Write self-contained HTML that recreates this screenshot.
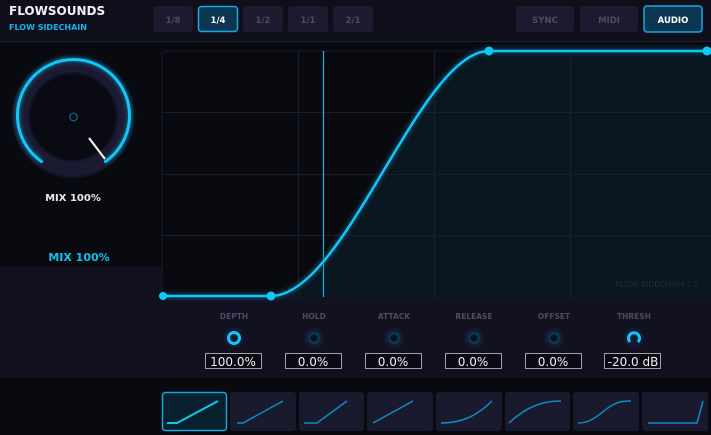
<!DOCTYPE html>
<html><head><style>
html,body{margin:0;padding:0;width:711px;height:435px;overflow:hidden;background:#090a10;font-family:"DejaVu Sans","Liberation Sans",sans-serif}
</style></head><body>
<svg width="711" height="435" viewBox="0 0 711 435" xmlns="http://www.w3.org/2000/svg" style="display:block" font-family="'DejaVu Sans',sans-serif">
<defs>
<filter id="gl" x="-20%" y="-20%" width="140%" height="140%"><feGaussianBlur stdDeviation="2"/></filter>
</defs>
<rect x="0" y="0" width="711" height="435" fill="#090a10"/>
<rect x="0" y="0" width="711" height="41" fill="#0f0f1b"/>
<line x1="0" y1="41.5" x2="711" y2="41.5" stroke="#1a2030" stroke-width="1"/>
<rect x="0" y="267" width="162" height="111" fill="#11111f"/>
<rect x="162" y="297" width="549" height="81" fill="#11111f"/>
<text x="9" y="15" font-size="12" font-weight="bold" fill="#f2f2f5">FLOWSOUNDS</text>
<text x="9" y="30" font-size="8" font-weight="bold" fill="#14b4ee">FLOW SIDECHAIN</text>
<g font-size="8.5" font-weight="bold" text-anchor="middle">
<rect x="153" y="6" width="40" height="26" rx="3" fill="#1c1a2e"/><text x="173" y="23" fill="#4c4a66">1/8</text>
<rect x="198.5" y="6.5" width="39" height="25" rx="3" fill="#0b3550" stroke="#16a8e0" stroke-width="1.5"/><text x="218" y="23" fill="#fff">1/4</text>
<rect x="243" y="6" width="40" height="26" rx="3" fill="#1c1a2e"/><text x="263" y="23" fill="#4c4a66">1/2</text>
<rect x="288" y="6" width="40" height="26" rx="3" fill="#1c1a2e"/><text x="308" y="23" fill="#4c4a66">1/1</text>
<rect x="333" y="6" width="40" height="26" rx="3" fill="#1c1a2e"/><text x="353" y="23" fill="#4c4a66">2/1</text>
<rect x="516" y="6" width="58" height="26" rx="3" fill="#1c1a2e"/><text x="545" y="23" fill="#4c4a66">SYNC</text>
<rect x="580" y="6" width="58" height="26" rx="3" fill="#1c1a2e"/><text x="609" y="23" fill="#4c4a66">MIDI</text>
<rect x="644" y="6" width="58" height="26" rx="3" fill="#0b3550" stroke="#16a8e0" stroke-width="1.5"/><text x="673" y="23" fill="#fff">AUDIO</text>
</g>
<circle cx="73" cy="117" r="61" fill="#121428"/>
<circle cx="73" cy="117" r="52" fill="none" stroke="#1c1a30" stroke-width="14"/>
<path d="M41.5 161.5 A56 56 0 1 1 105.5 161.5" fill="none" stroke="#0a6a90" stroke-width="6" filter="url(#gl)" opacity="0.7"/>
<path d="M41.5 161.5 A56 56 0 1 1 105.5 161.5" fill="none" stroke="#10c8f5" stroke-width="3" stroke-linecap="round"/>
<circle cx="73" cy="117" r="43" fill="#0a0b12"/>
<circle cx="73.5" cy="117" r="3.8" fill="none" stroke="#0a6a90" stroke-width="1.2"/>
<line x1="89" y1="138" x2="105" y2="159" stroke="#f0f0f0" stroke-width="2.2"/>
<text x="73" y="201" font-size="10" font-weight="bold" fill="#e8e8ee" text-anchor="middle">MIX 100%</text>
<text x="79" y="261" font-size="11" font-weight="bold" fill="#10c0f0" text-anchor="middle">MIX 100%</text>
<rect x="162" y="51" width="560" height="246" rx="4" fill="#090a10" stroke="#181a2a" stroke-width="1"/>
<path d="M162 296 L271 296 C345 296 420 51 489 51 L711 51 L711 296 Z" fill="#0a1620"/>
<g stroke="#1a1c30" stroke-width="1">
<line x1="298.5" y1="51" x2="298.5" y2="297"/><line x1="434.5" y1="51" x2="434.5" y2="297"/><line x1="570.5" y1="51" x2="570.5" y2="297"/>
<line x1="162" y1="112.5" x2="711" y2="112.5"/><line x1="162" y1="174.5" x2="711" y2="174.5"/><line x1="162" y1="235.5" x2="711" y2="235.5"/>
</g>
<line x1="323.5" y1="51" x2="323.5" y2="297" stroke="#10b8e8" stroke-width="1.2"/>
<path d="M162 296 L271 296 C345 296 420 51 489 51 L711 51" fill="none" stroke="#0a5a80" stroke-width="6" opacity="0.6" filter="url(#gl)"/>
<path d="M162 296 L271 296 C345 296 420 51 489 51 L711 51" fill="none" stroke="#10c8f5" stroke-width="2.5"/>
<g fill="#10c8f5"><circle cx="163" cy="296" r="4"/><circle cx="271" cy="296" r="4.5"/><circle cx="489" cy="51" r="4.5"/><circle cx="707" cy="51" r="4.5"/></g>
<text x="698" y="287" font-size="8" fill="#242838" text-anchor="end" font-family="'Liberation Sans',sans-serif">FLOW SIDECHAIN 1.1</text>
<g font-size="7.5" font-weight="bold" fill="#4c4a66" text-anchor="middle">
<text x="234" y="319">DEPTH</text><text x="314" y="319">HOLD</text><text x="394" y="319">ATTACK</text><text x="474" y="319">RELEASE</text><text x="554" y="319">OFFSET</text><text x="634" y="319">THRESH</text>
</g>
<g>
<circle cx="234" cy="338" r="10" fill="#181a34"/><circle cx="234" cy="338" r="5.5" fill="none" stroke="#10c8f5" stroke-width="3"/>
<circle cx="314" cy="338" r="10" fill="#181a34"/><circle cx="314" cy="338" r="5" fill="none" stroke="#0a3a58" stroke-width="2.5"/><circle cx="314" cy="338" r="3" fill="#081020"/>
<circle cx="394" cy="338" r="10" fill="#181a34"/><circle cx="394" cy="338" r="5" fill="none" stroke="#0a3a58" stroke-width="2.5"/><circle cx="394" cy="338" r="3" fill="#081020"/>
<circle cx="474" cy="338" r="10" fill="#181a34"/><circle cx="474" cy="338" r="5" fill="none" stroke="#0a3a58" stroke-width="2.5"/><circle cx="474" cy="338" r="3" fill="#081020"/>
<circle cx="554" cy="338" r="10" fill="#181a34"/><circle cx="554" cy="338" r="5" fill="none" stroke="#0a3a58" stroke-width="2.5"/><circle cx="554" cy="338" r="3" fill="#081020"/>
<circle cx="634" cy="338" r="10" fill="#181a34"/><path d="M630 342 A5.5 5.5 0 1 1 638 342" fill="none" stroke="#10c8f5" stroke-width="3"/>
</g>
<g fill="#0a0b12" stroke="#a0a0aa" stroke-width="1">
<rect x="205.5" y="353.5" width="56" height="15"/><rect x="285.5" y="353.5" width="56" height="15"/><rect x="365.5" y="353.5" width="56" height="15"/><rect x="445.5" y="353.5" width="56" height="15"/><rect x="525.5" y="353.5" width="56" height="15"/><rect x="604.5" y="353.5" width="56" height="15"/>
</g>
<g font-size="12" fill="#f0f0f0" text-anchor="middle">
<text x="233" y="366">100.0%</text><text x="313" y="366">0.0%</text><text x="393" y="366">0.0%</text><text x="473" y="366">0.0%</text><text x="553" y="366">0.0%</text><text x="633" y="366">-20.0 dB</text>
</g>
<g fill="#1a1a2e">
<rect x="230" y="392" width="66" height="39" rx="3"/><rect x="299" y="392" width="65" height="39" rx="3"/><rect x="367" y="392" width="66" height="39" rx="3"/><rect x="436" y="392" width="66" height="39" rx="3"/><rect x="505" y="392" width="65" height="39" rx="3"/><rect x="573" y="392" width="66" height="39" rx="3"/><rect x="642" y="392" width="66" height="39" rx="3"/>
</g>
<rect x="162.5" y="392.5" width="64" height="38" rx="3" fill="#08202e" stroke="#12a8e0" stroke-width="1.5"/>
<g fill="none" stroke="#0d8cc0" stroke-width="1.5">
<path d="M167 423 L177 423 L218 401" stroke="#10c8f5" stroke-width="2"/>
<path d="M237 423 L243 423 L283 401"/>
<path d="M304 423 L317 423 L347 401"/>
<path d="M373 423 L413 401"/>
<path d="M441 423 C460 423 476 417 492 401"/>
<path d="M509 423 C528 405 545 401 561 401"/>
<path d="M578 423 C600 423 605 401 628 401 L631 401"/>
<path d="M648 423 L697 423 L703 401"/>
</g>
</svg>
</body></html>
